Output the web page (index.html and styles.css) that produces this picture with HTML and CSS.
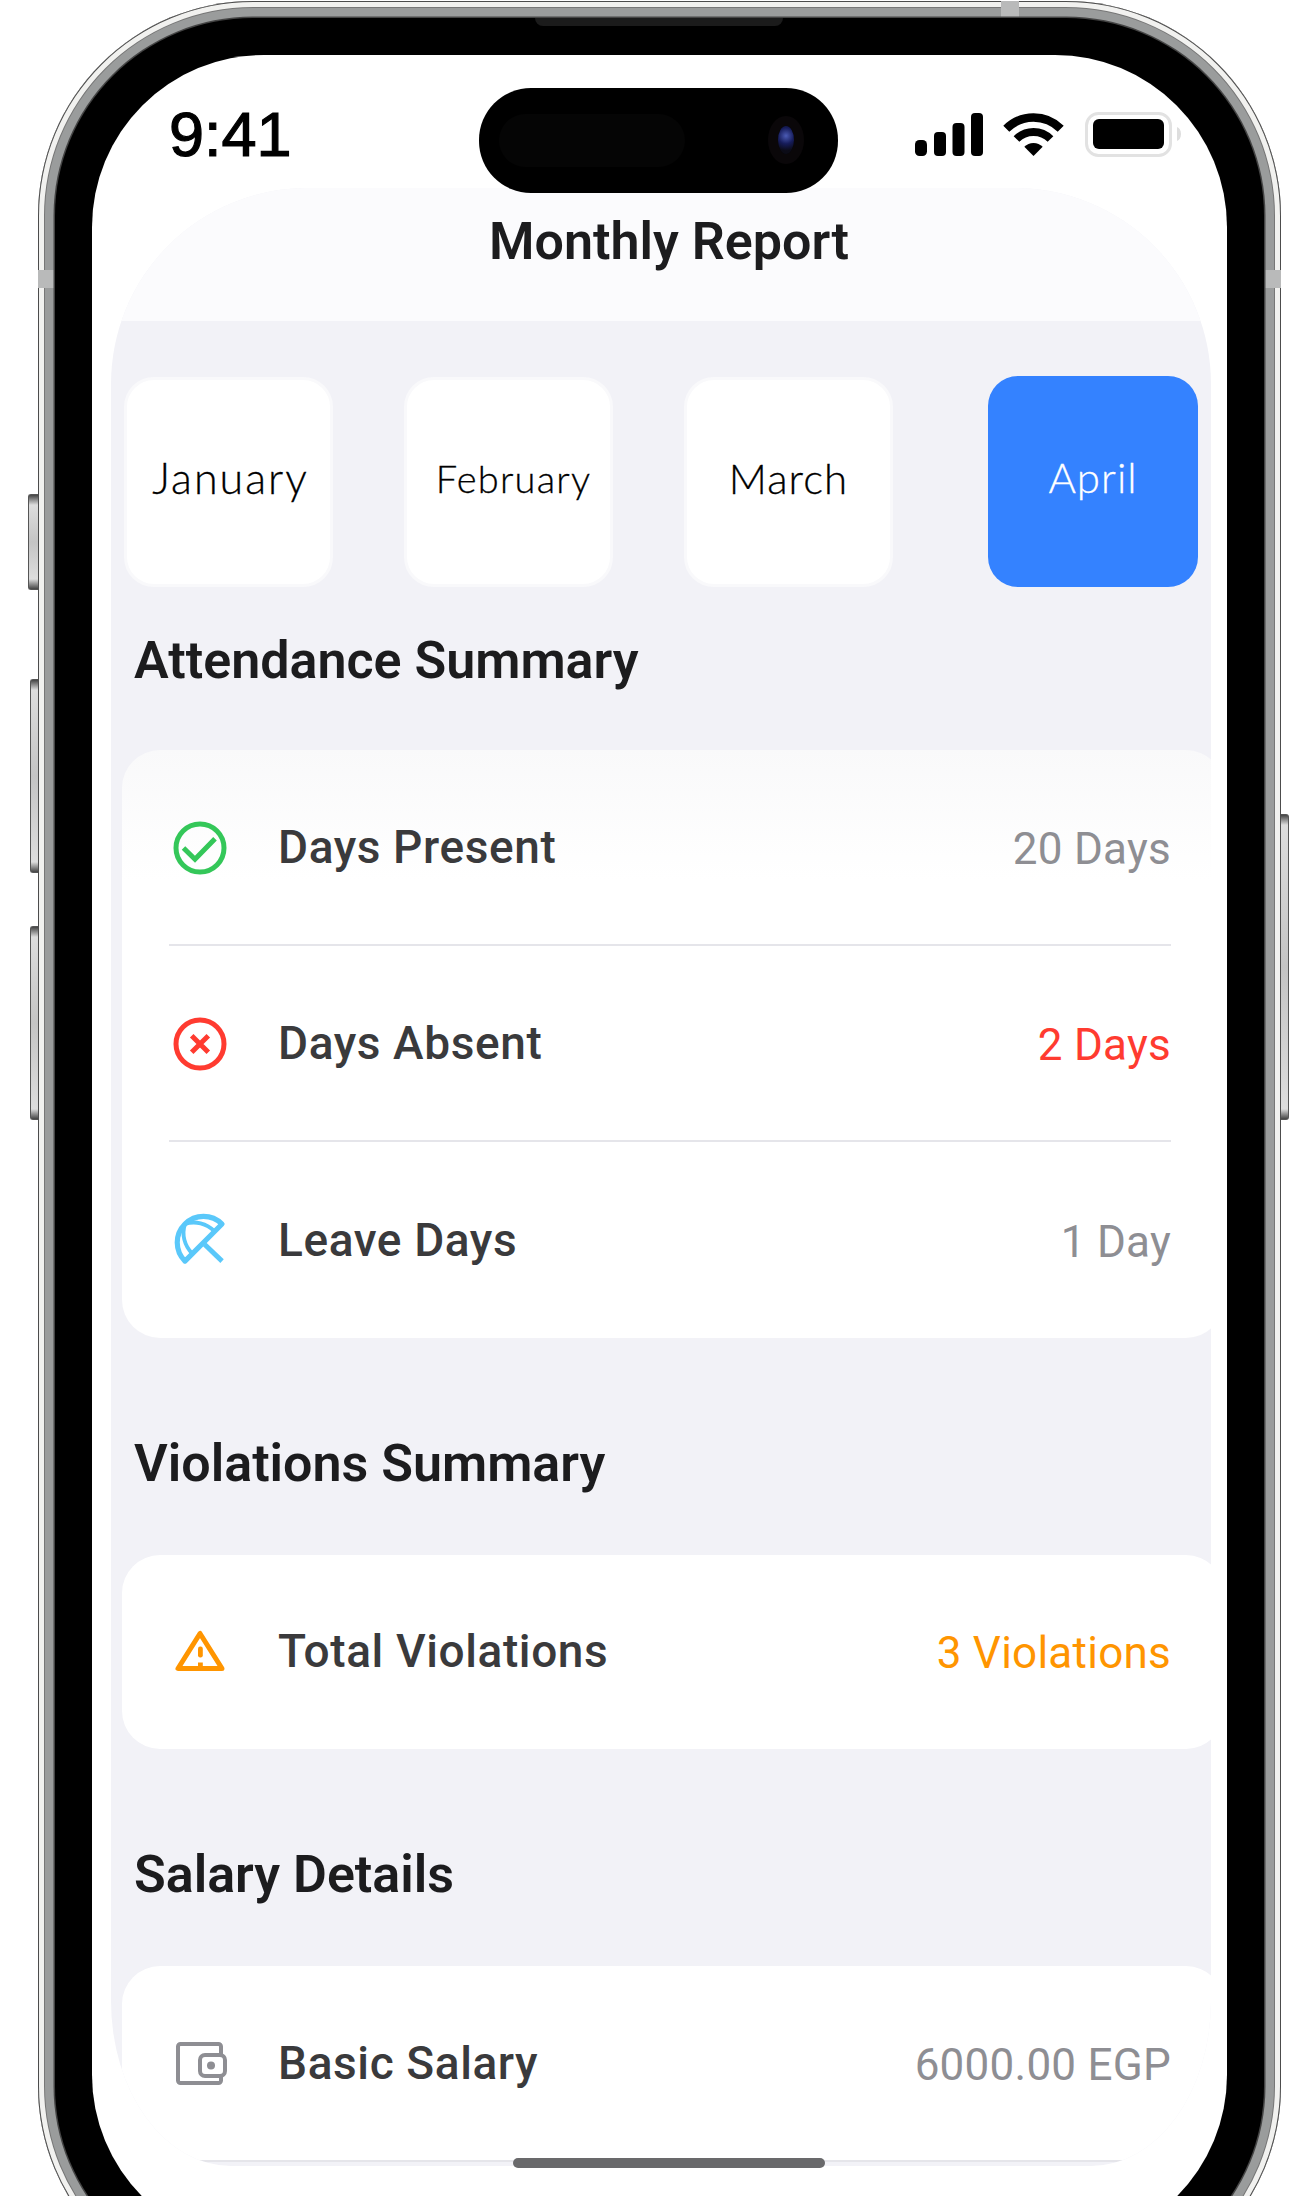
FILE: index.html
```html
<!DOCTYPE html>
<html lang="en">

<head>
    <meta charset="UTF-8">
    <meta name="viewport" content="width=device-width, initial-scale=1.0">
    <title>Monthly Report</title>
    <link rel="stylesheet" href="styles.css">
</head>

<body>
    <div class="phone">
        <!-- hardware bits on the frame -->
        <span class="btn btn-mute"></span>
        <span class="btn btn-up"></span>
        <span class="btn btn-down"></span>
        <span class="btn btn-power"></span>
        <span class="band band-left"></span>
        <span class="band band-right"></span>
        <span class="band band-top"></span>

        <div class="bezel">
            <span class="speaker"></span>
            <div class="screen">
                <div class="island">
                    <span class="island-sensor"></span>
                    <span class="island-lens"></span>
                </div>

                <div class="statusbar">
                    <span class="time">9:41</span>
                    <svg class="status-icons" width="266" height="45" viewBox="0 0 266 45">
                        <rect x="0" y="28" width="12" height="16" rx="4.5" />
                        <rect x="19" y="20" width="12" height="24" rx="4" />
                        <rect x="37.500" y="11" width="12" height="33" rx="4" />
                        <rect x="56" y="1" width="12" height="43" rx="4" />
                        <path d="M91.300 16.800A38.500 38.500 0 0 1 145.700 16.800" fill="none" stroke="#000" stroke-width="8.500" />
                        <path d="M101.500 27A24 24 0 0 1 135.500 27" fill="none" stroke="#000" stroke-width="8" />
                        <path d="M118.500 44L109.300 34.800A13 13 0 0 1 127.700 34.800Z" />
                        <rect x="171.500" y="1.500" width="84" height="42" rx="12" fill="none" stroke="#e2e2e2" stroke-width="3" />
                        <rect x="178" y="7" width="71" height="30" rx="6" />
                        <path d="M262 15c2.500 1 4 3.500 4 7s-1.500 6-4 7Z" fill="#dedede" />
                    </svg>
                </div>

                <div class="panel">
                    <div class="panel-head">
                        <h1>Monthly Report</h1>
                    </div>

                    <div class="months">
                        <div class="month m-jan">January</div>
                        <div class="month m-feb">February</div>
                        <div class="month">March</div>
                        <div class="month active">April</div>
                    </div>

                    <h2 class="first">Attendance Summary</h2>
                    <div class="card fade">
                        <div class="row">
                            <svg class="icon" width="60" height="60" viewBox="0 0 60 60" fill="none" stroke="#34c759">
                                <circle cx="30" cy="30" r="24" stroke-width="5" />
                                <path d="M13.500 30L25 41.300 45 20.700" stroke-width="5" />
                            </svg>
                            <span class="label">Days Present</span>
                            <span class="value">20 Days</span>
                        </div>
                        <div class="row">
                            <svg class="icon" width="60" height="60" viewBox="0 0 60 60" fill="none" stroke="#ff3b30">
                                <circle cx="30" cy="30" r="24" stroke-width="5" />
                                <path d="M21.700 21.700L38.300 38.300M38.300 21.700L21.700 38.300" stroke-width="5" />
                            </svg>
                            <span class="label">Days Absent</span>
                            <span class="value red">2 Days</span>
                        </div>
                        <div class="row last">
                            <svg class="icon" width="60" height="60" viewBox="0 0 60 60">
                                <g transform="translate(-.5 -2.460) scale(2.590)" fill="none" stroke="#5ac8fa">
                                    <path d="M5.970 20.280C2 16.330 2 9.930 5.960 5.980 9.930 2 16.330 2.020 20.280 5.970Z" stroke-width="2" stroke-linejoin="round" />
                                    <path d="M17.420 8.830C14.290 5.700 9.910 4.650 5.980 5.950M8.830 17.420C5.700 14.290 4.650 9.910 5.950 5.980" stroke-width="1.500" />
                                    <path d="M13.600 13.900L20.300 20.300" stroke-width="1.900" />
                                </g>
                            </svg>
                            <span class="label">Leave Days</span>
                            <span class="value">1 Day</span>
                        </div>
                    </div>

                    <h2>Violations Summary</h2>
                    <div class="card">
                        <div class="row last short">
                            <svg class="icon" width="60" height="60" viewBox="0 0 60 60">
                                <path d="M30 11.500L8 46.500H52Z" fill="none" stroke="#ff9500" stroke-width="5" stroke-linejoin="round" />
                                <rect x="28" y="24.500" width="4.800" height="11" rx="2.200" fill="#ff9500" />
                                <rect x="28" y="40.500" width="4.800" height="4.500" fill="#ff9500" />
                            </svg>
                            <span class="label">Total Violations</span>
                            <span class="value orange">3 Violations</span>
                        </div>
                    </div>

                    <h2>Salary Details</h2>
                    <div class="card">
                        <div class="row">
                            <svg class="icon" width="60" height="60" viewBox="0 0 60 60" fill="none" stroke="#8e8e93" stroke-width="4">
                                <path d="M51 20V12.500A2.500 2.500 0 0 0 48.500 10H10.500A2.500 2.500 0 0 0 8 12.500V46.500A2.500 2.500 0 0 0 10.500 49H48.500A2.500 2.500 0 0 0 51 46.500V42" />
                                <rect x="30" y="21" width="25" height="21" rx="5" />
                                <circle cx="41" cy="31.500" r="4" fill="#8e8e93" stroke="none" />
                            </svg>
                            <span class="label">Basic Salary</span>
                            <span class="value">6000.00 EGP</span>
                        </div>
                    </div>
                </div>

                <div class="home-bar"></div>
            </div>
        </div>
    </div>
</body>

</html>
```

FILE: styles.css
```css
html, body {
    margin: 0;
    height: 2196px;
    overflow: hidden;
    background: #fff;
}

/* phone frame */
.phone {
    position: relative;
    margin: 1px 0 0 38px;
    width: 1243px;
    height: 2300px;
    padding: 17px;
    box-sizing: border-box;
    border-radius: 215px;
    background: #9a9c9c;
    box-shadow: inset 0 0 0 1px #4c4c4c, inset 0 0 0 6px #f1f1ef, inset 0 0 0 7px #777;
}

.btn {
    position: absolute;
    width: 9px;
    left: -10px;
    border: 1px solid #555;
    border-right: none;
    border-radius: 3px 0 0 3px;
    box-sizing: content-box;
    background: linear-gradient(#444 0, #ddd 10px, #c4c4c4 50%, #ddd calc(100% - 10px), #444 100%);
}

.btn-mute { top: 493px; height: 94px; }
.btn-up { top: 678px; height: 192px; left: -8px; width: 7px; }
.btn-down { top: 925px; height: 192px; left: -8px; width: 7px; }
.btn-power {
    top: 813px;
    height: 304px;
    left: auto;
    right: -8px;
    width: 7px;
    border: 1px solid #555;
    border-left: none;
    border-radius: 0 3px 3px 0;
}

.band { position: absolute; background: #b9baba; }
.band-left { left: 0; top: 269px; width: 17px; height: 18px; }
.band-right { right: 0; top: 269px; width: 17px; height: 18px; }
.band-top { left: 963px; top: 0; width: 18px; height: 17px; }

.bezel {
    position: relative;
    height: 100%;
    padding: 37px;
    box-sizing: border-box;
    border-radius: 198px;
    background: #000;
    box-shadow: 0 0 0 1.500px #444;
}

.speaker {
    position: absolute;
    left: 480px;
    top: 0;
    width: 248px;
    height: 8px;
    border-radius: 0 0 8px 8px;
    background: #1b1b1b;
}

.screen {
    position: relative;
    height: 100%;
    border-radius: 172px;
    background: #fff;
}

/* lies over the panel top edge */
.island {
    position: absolute;
    left: 387px;
    top: 33px;
    z-index: 2;
    width: 359px;
    height: 105px;
    border-radius: 52px;
    background: #000;
}

.island-sensor {
    position: absolute;
    left: 20px;
    top: 26px;
    width: 186px;
    height: 53px;
    border-radius: 27px;
    background: #050505;
}

.island-lens {
    position: absolute;
    left: 299px;
    top: 38px;
    width: 16px;
    height: 28px;
    border-radius: 50%;
    background: radial-gradient(circle at 50% 35%, #4b5bb5 0, #161c5a 40%, #0b0b16 75%);
    box-shadow: 0 0 0 10px #0a0709;
}

/* status bar */
.statusbar {
    display: flex;
    justify-content: space-between;
    height: 133px;
    padding: 43px 46px 0 77px;
    box-sizing: border-box;
}

.time {
    font-family: "Liberation Sans", Arial, sans-serif;
    font-size: 63px;
    line-height: 72px;
    color: #000;
    -webkit-text-stroke: 1.200px #000;
}

.status-icons {
    margin-top: 14px;
}

/* grey sheet */
.panel {
    margin-left: 19px;
    width: 1100px;
    height: 1978px;
    overflow: hidden;
    font-family: Roboto, "Liberation Sans", sans-serif;
    background: #f2f2f7;
    border-radius: 196px 196px 120px 120px / 196px 196px 165px 165px;
}

.panel-head {
    height: 133px;
    padding: 17px 0 0 16px;
    box-sizing: border-box;
    text-align: center;
    background: #fbfbfd;
}

h1 {
    margin: 0;
    font-size: 52px;
    line-height: 74px;
    font-weight: 600;
    color: #1c1c1e;
}

.months {
    display: flex;
    gap: 71px;
    padding: 56px 0 0 13px;
}

.month {
    display: flex;
    align-items: center;
    justify-content: center;
    width: 209px;
    height: 210px;
    box-sizing: border-box;
    padding-bottom: 9px;
    border: 3px solid #f9f9fb;
    border-radius: 30px;
    background: #fff;
    font-family: Lato, "Noto Sans", sans-serif;
    font-size: 42px;
    font-weight: 300;
    letter-spacing: 1px;
    color: #000;
    -webkit-text-stroke: 0.300px #000;
}

.m-jan { padding-left: 4px; font-size: 43px; letter-spacing: 2px; }
.m-feb { padding-left: 10px; font-size: 38px; letter-spacing: 1.200px; }

.month.active {
    width: 210px;
    height: 211px;
    margin: -1px 0 0 24px;
    border: none;
    background: #3482ff;
    color: #fff;
    -webkit-text-stroke: 0.300px #fff;
}

h2 {
    margin: 98px 0 63px 23px;
    font-size: 52px;
    line-height: 56px;
    font-weight: 600;
    color: #1c1c1e;
}

h2.first {
    margin: 46px 0 61px 23px;
}

.card {
    margin: 0 -13px 0 10.500px;
    border-radius: 38px;
    background: #fff;
}

.card.fade {
    background: linear-gradient(#f9f9fa, #fff 130px);
}

.row {
    display: flex;
    align-items: center;
    height: 196px;
    margin: 0 53px 0 47px;
    padding: 2px 0 0 1px;
    box-sizing: border-box;
    border-bottom: 2px solid #e5e5ea;
}

.row.last {
    border-bottom: none;
}

.row.short {
    height: 194px;
    padding-top: 0;
}

.icon {
    flex: none;
    margin-right: 48.500px;
}

.label {
    flex: 1;
    padding-bottom: 2px;
    font-size: 46px;
    font-weight: 500;
    letter-spacing: 0.600px;
    color: #3a3a3c;
}

.value {
    padding-top: 2px;
    font-size: 44px;
    letter-spacing: 0.250px;
    color: #8e8e93;
}

.value.red { color: #ff3b30; }
.value.orange { color: #ff9500; }

.home-bar {
    position: absolute;
    left: 421px;
    top: 2103px;
    width: 312px;
    height: 10px;
    border-radius: 5px;
    background: #69696b;
}
```
